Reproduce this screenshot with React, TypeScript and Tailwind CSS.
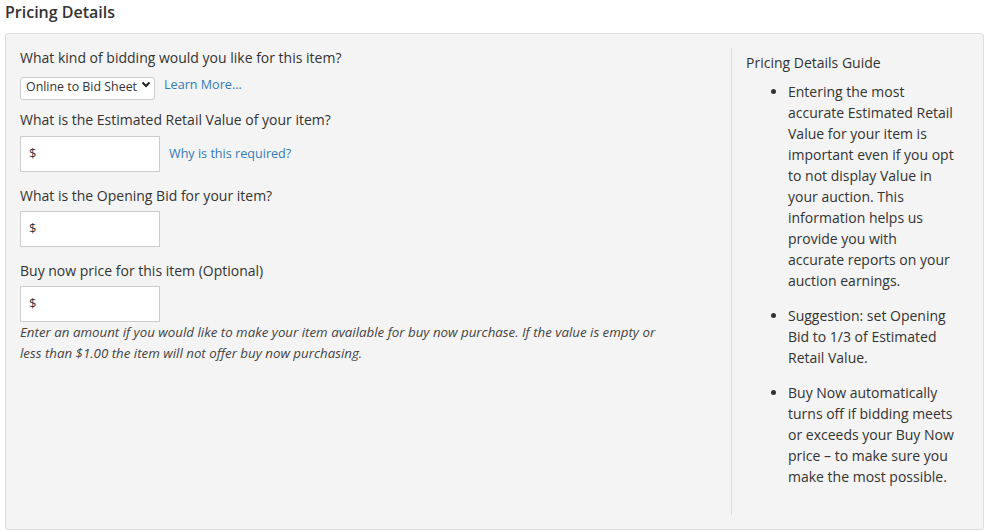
export default function App() {
  const font = { fontFamily: '"Open Sans", "Liberation Sans", sans-serif' }

  const MoneyInput = () => (
    <div className="flex h-[36px] w-[140px] items-center border border-[#ccc] bg-white pl-[8px]">
      <span className="text-[13px] text-[#333]">$</span>
      <input type="text" className="h-full w-full bg-transparent px-1 text-[13px] text-[#333] outline-none" />
    </div>
  )

  return (
    <div className="h-[532px] w-[989px] bg-white text-[#333]" style={font}>
      <h2 className="px-[5px] pt-[1px] text-[16px] font-semibold leading-[22px] text-[#333]">Pricing Details</h2>

      <div className="mx-[5px] mt-[10px] flex h-[497px] rounded-[3px] border border-[#ddd] bg-[#f4f4f4] p-[14px]">
        {/* Left column */}
        <div className="flex-1 pr-[30px]">
          <p className="text-[14px] leading-[20px]">What kind of bidding would you like for this item?</p>
          <div className="mt-[5px] flex h-[23px] items-center gap-[9px]">
            <div className="relative h-[23px] w-[135px]">
              <select
                defaultValue="online"
                className="h-[23px] w-full appearance-none rounded-[3px] border border-[#ccc] bg-white pb-[3px] pt-0 pl-[5px] pr-[4px] text-[12.4px] leading-[18px] text-[#333] outline-none"
              >
                <option value="online">Online to Bid Sheet</option>
                <option value="online-only">Online Only</option>
                <option value="bid-sheet">Bid Sheet Only</option>
              </select>
              <svg
                viewBox="0 0 10 10"
                className="pointer-events-none absolute right-[4px] top-[6px] h-[10px] w-[10px]"
                fill="none"
                stroke="#222"
                strokeWidth="2"
              >
                <path d="M1.5 3.5l3.5 3.5 3.5-3.5" />
              </svg>
            </div>
            <a href="#" className="text-[12.6px] leading-[23px] text-[#337ab7]">Learn More...</a>
          </div>

          <p className="mt-[14px] text-[14px] leading-[20px]">What is the Estimated Retail Value of your item?</p>
          <div className="mt-[6px] flex items-center gap-[9px]">
            <MoneyInput />
            <a href="#" className="text-[12.6px] text-[#337ab7]">Why is this required?</a>
          </div>

          <p className="mt-[14px] text-[14px] leading-[20px]">What is the Opening Bid for your item?</p>
          <div className="mt-[5px]">
            <MoneyInput />
          </div>

          <p className="mt-[14px] text-[14px] leading-[20px]">Buy now price for this item (Optional)</p>
          <div className="mt-[5px]">
            <MoneyInput />
          </div>
          <p className="max-w-[650px] text-[13.3px] italic leading-[21px] text-[#444]">
            Enter an amount if you would like to make your item available for buy now purchase. If the value is empty or less than $1.00 the item will not offer buy now purchasing.
          </p>
        </div>

        {/* Guide column */}
        <div className="w-[238px] border-l border-[#ddd] pl-[14px] pr-[14px]">
          <p className="mt-[4px] text-[14px] leading-[21px]">Pricing Details Guide</p>
          <ul className="mt-[8px] list-disc pl-[42px] text-[14px] leading-[21px] text-[#333]">
            <li className="mb-[14px]">
              Entering the most accurate Estimated Retail Value for your item is important even if you opt to not display Value in your auction. This information helps us provide you with accurate reports on your auction earnings.
            </li>
            <li className="mb-[14px]">Suggestion: set Opening Bid to 1/3 of Estimated Retail Value.</li>
            <li>Buy Now automatically turns off if bidding meets or exceeds your Buy Now price – to make sure you make the most possible.</li>
          </ul>
        </div>
      </div>
    </div>
  )
}
